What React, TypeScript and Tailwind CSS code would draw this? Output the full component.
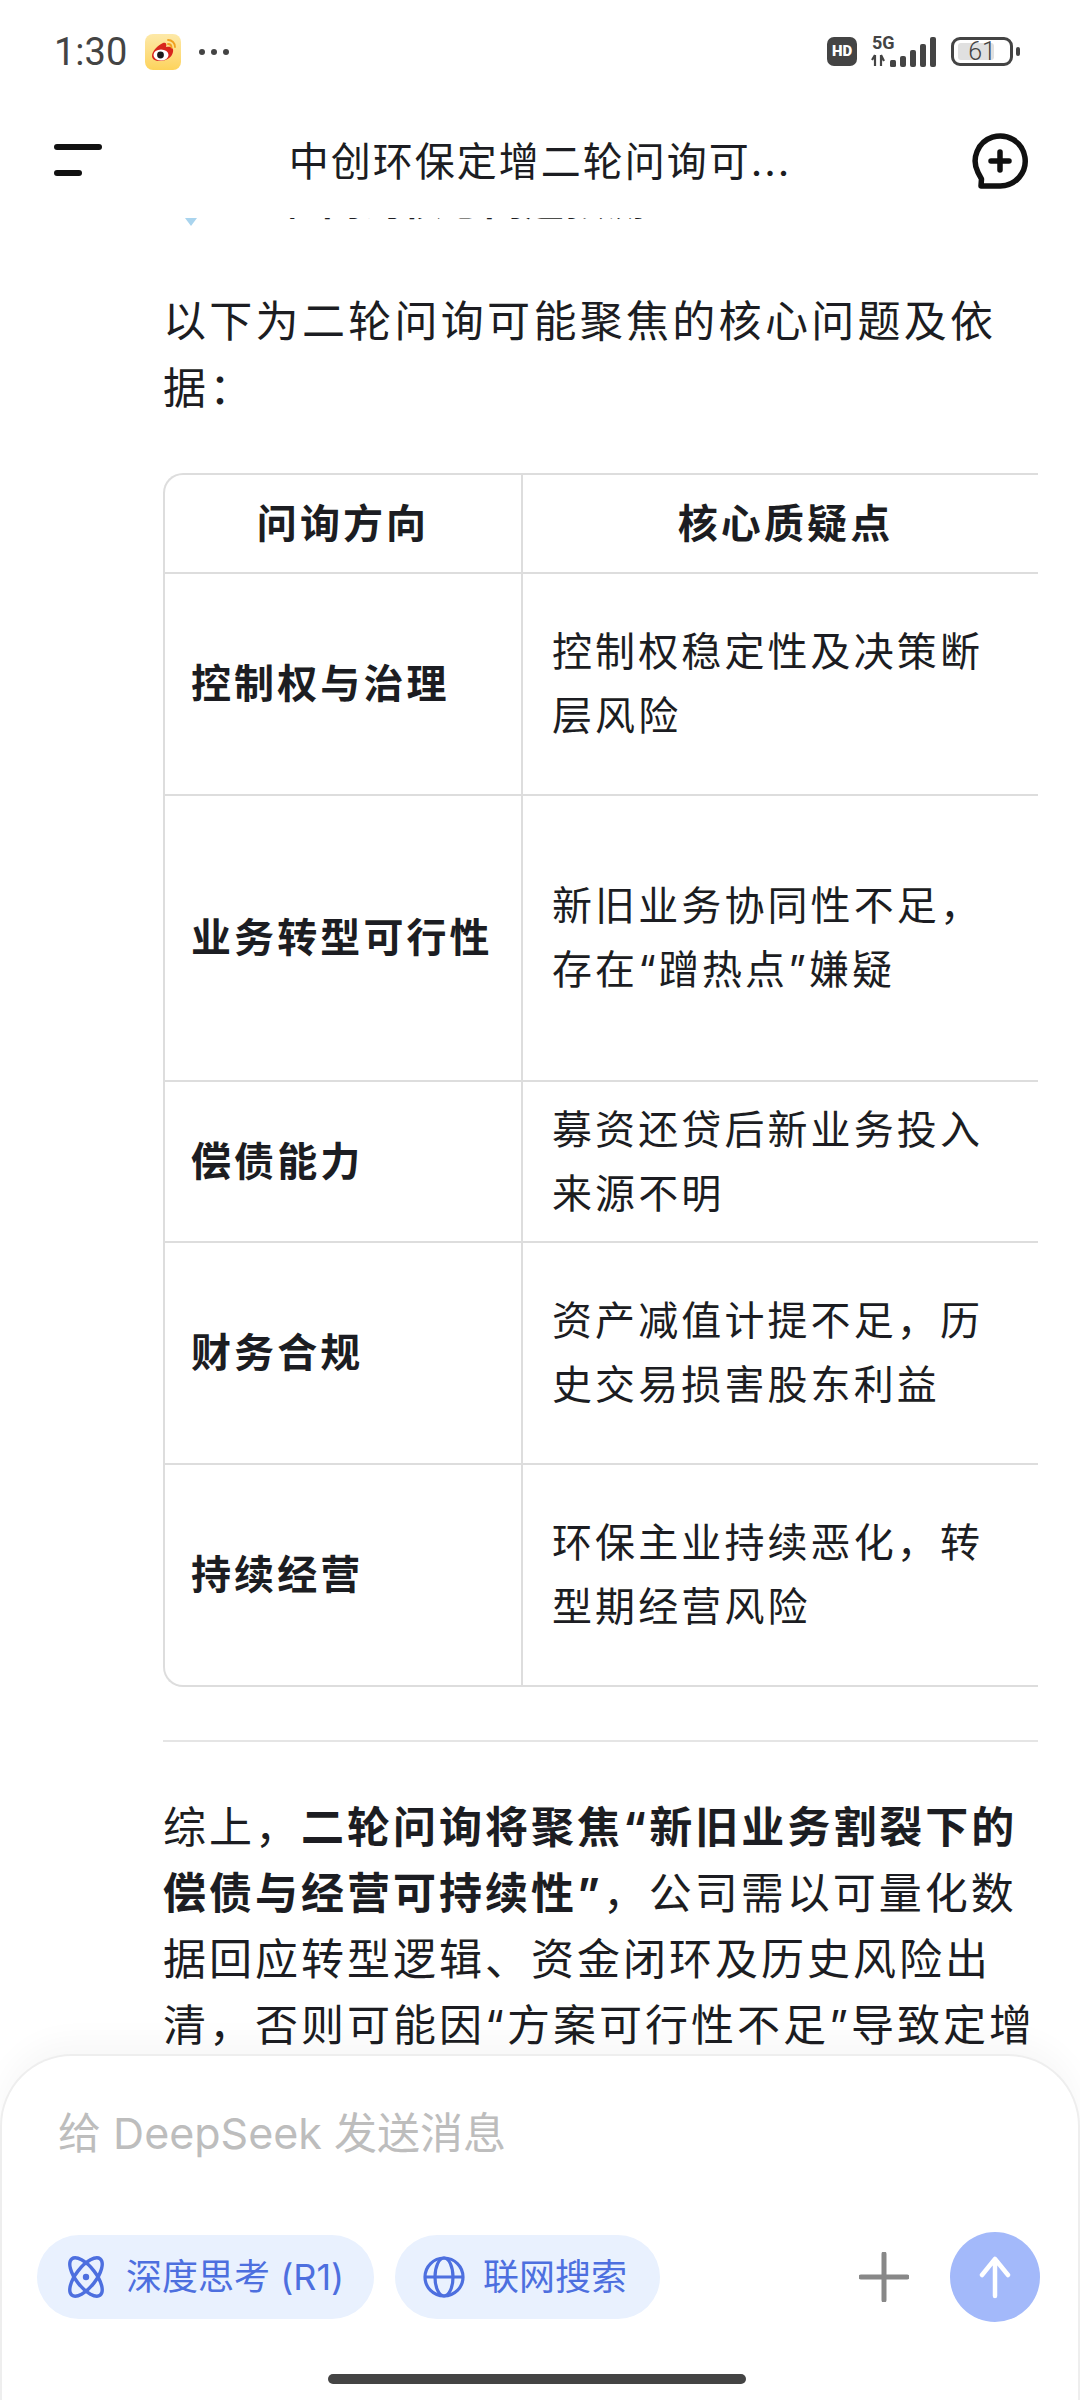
import React from 'react';

const FONT = "font-['Inter','Noto_Sans_CJK_SC',sans-serif]";

interface Row {
  title: string;
  lines: string[];
  height: string;
}

const rows: Row[] = [
  { title: '控制权与治理', lines: ['控制权稳定性及决策断', '层风险'], height: 'h-[222px]' },
  { title: '业务转型可行性', lines: ['新旧业务协同性不足，', '存在“蹭热点”嫌疑'], height: 'h-[286px]' },
  { title: '偿债能力', lines: ['募资还贷后新业务投入', '来源不明'], height: 'h-[161px]' },
  { title: '财务合规', lines: ['资产减值计提不足，历', '史交易损害股东利益'], height: 'h-[222px]' },
  { title: '持续经营', lines: ['环保主业持续恶化，转', '型期经营风险'], height: 'h-[220px]' },
];

const StatusBar = () => (
  <div className="flex h-[100px] items-center justify-between pl-[54px] pr-[60px] pt-[3px] text-[#444444]">
    <div className="flex items-center">
      <span className="w-[91px] font-['Roboto',sans-serif] text-[38px] leading-none">1:30</span>
      <div className="flex h-[36px] w-[36px] items-center justify-center rounded-[8px] bg-gradient-to-b from-[#fde9a8] to-[#fdd35a]">
        <svg viewBox="0 0 36 36" className="h-[36px] w-[36px]">
          <path d="M7 22c0-5 6-11 11-13 3-1 4 1 3 4 5-1 8 1 7 5-1 6-8 9-13 9s-8-2-8-5z" fill="#d8251d" />
          <ellipse cx="16" cy="21" rx="7.5" ry="5.5" fill="#fff" />
          <circle cx="15.5" cy="21" r="3.4" fill="#1a1a1a" />
          <path d="M23 6c4 0 7 3 7 7M23 10c2 0 3.500 1.500 3.500 3.500" stroke="#f0a020" strokeWidth="1.800" fill="none" strokeLinecap="round" />
        </svg>
      </div>
      <div className="ml-[18px] flex gap-[6px]">
        <span className="h-[6px] w-[6px] rounded-full bg-[#444444]" />
        <span className="h-[6px] w-[6px] rounded-full bg-[#444444]" />
        <span className="h-[6px] w-[6px] rounded-full bg-[#444444]" />
      </div>
    </div>
    <div className="flex items-center">
      <div className="flex h-[29px] w-[30px] items-center justify-center rounded-[7px] bg-[#444444] font-['Roboto',sans-serif] text-[15px] font-black leading-none text-white">
        HD
      </div>
      <svg viewBox="0 0 66 32" className="ml-[14px] h-[32px] w-[66px]">
        <text x="1" y="13" fontSize="18" fontWeight="700" fontFamily="Roboto, sans-serif" fill="#444444">5G</text>
        <path d="M4 19v11M1 24l3-5M10 19v11M13 25l-3-6" stroke="#444444" strokeWidth="2.200" fill="none" />
        <rect x="19" y="24" width="6" height="7" rx="1.500" fill="#444444" />
        <rect x="29" y="20" width="6" height="11" rx="2" fill="#444444" />
        <rect x="39" y="14" width="6" height="17" rx="2" fill="#444444" />
        <rect x="49" y="8" width="6" height="23" rx="2" fill="#444444" />
        <rect x="59" y="1" width="6" height="30" rx="2" fill="#444444" />
      </svg>
      <div className="ml-[14px] flex items-center">
        <div className="relative flex h-[29px] w-[62px] items-center justify-center rounded-[9px] border-[3px] border-[#444444] font-['Roboto',sans-serif] text-[25px] font-light leading-none">
          <span className="absolute bottom-[3px] left-[4px] top-[3px] w-[36px] rounded-[3px] bg-[#e0e0e0]" />
          <span className="relative">61</span>
        </div>
        <span className="ml-[3px] h-[9px] w-[4px] rounded-full bg-[#444444]" />
      </div>
    </div>
  </div>
);

const Header = () => (
  <div className="flex h-[118px] items-center justify-between pl-[54px] pr-[50px] pt-[6px]">
    <div className="-mt-[4px] flex w-[56px] flex-col gap-[20px]">
      <span className="h-[6px] w-[48px] rounded-full bg-[#111111]" />
      <span className="h-[6px] w-[28px] rounded-full bg-[#111111]" />
    </div>
    <div className="whitespace-nowrap text-[40px] leading-none tracking-[2px] text-[#1c1d22]">中创环保定增二轮问询可...</div>
    <svg viewBox="0 0 60 60" className="h-[60px] w-[60px]" fill="none" stroke="#111111" strokeLinecap="round" strokeLinejoin="round">
      <path d="M11 54h19a25 25 0 1 0-22-13.500l3.500 6.500z" strokeWidth="5.500" />
      <path d="M30 20v18M21 29h18" strokeWidth="5.500" />
    </svg>
  </div>
);

const AnswerTable = () => (
  <div className="w-[875px] overflow-hidden">
    <div className="w-[885px] overflow-hidden rounded-l-[20px] border-y-2 border-l-2 border-[#dddddd]">
      <div className="flex h-[99px] border-b-2 border-[#dddddd] text-[40px] font-bold tracking-[3.100px]">
        <div className="flex w-[358px] items-center justify-center border-r-2 border-[#dddddd]">问询方向</div>
        <div className="flex flex-1 items-center justify-center">核心质疑点</div>
      </div>
      {rows.map((row, i) => (
        <div key={row.title} className={`flex ${row.height} ${i < rows.length - 1 ? 'border-b-2 border-[#dddddd]' : ''}`}>
          <div className="flex w-[358px] items-center border-r-2 border-[#dddddd] pl-[26px] text-[40px] font-bold tracking-[3.100px]">
            {row.title}
          </div>
          <div className="flex flex-1 flex-col justify-center whitespace-nowrap pl-[29px] text-[40px] leading-[64px] tracking-[3.100px]">
            {row.lines.map((line) => (
              <div key={line}>{line}</div>
            ))}
          </div>
        </div>
      ))}
    </div>
  </div>
);

const Conversation = () => (
  <div className="h-[1840px] overflow-hidden pl-[163px] pr-[42px] text-[#1c1d22]">
    {/* line scrolled almost out of view under the header */}
    <div className="-mt-[43px] flex h-[52px] items-center whitespace-nowrap text-[40px] font-bold leading-none">
      <span className="ml-[22px] mt-[41px] h-0 w-0 border-x-[6px] border-t-[8px] border-x-transparent border-t-[#a9d4ee]" />
      <span className="ml-[44px] tracking-[0.500px]">二轮问询核心问题预测</span>
    </div>
    <p className="mt-[61px] whitespace-nowrap text-[43px] leading-[67px] tracking-[3.300px]">
      以下为二轮问询可能聚焦的核心问题及依
      <br />
      据：
    </p>
    <div className="mt-[51px]">
      <AnswerTable />
    </div>
    <div className="mt-[53px] h-[2px] bg-[#e5e5e5]" />
    <p className="mt-[52px] whitespace-nowrap text-[43px] leading-[66px] tracking-[3px]">
      综上，<b>二轮问询将聚焦“新旧业务割裂下的</b>
      <br />
      <b>偿债与经营可持续性”</b>，公司需以可量化数
      <br />
      据回应转型逻辑、资金闭环及历史风险出
      <br />
      清，否则可能因“方案可行性不足”导致定增
    </p>
  </div>
);

const AtomIcon = () => (
  <svg viewBox="0 0 42 42" className="h-[42px] w-[42px]" fill="none" stroke="#4d6fdf" strokeWidth="3.400">
    <ellipse cx="21" cy="21" rx="10" ry="23" transform="rotate(-38 21 21)" />
    <ellipse cx="21" cy="21" rx="10" ry="23" transform="rotate(38 21 21)" />
    <circle cx="21" cy="21" r="3.200" fill="#4d6fdf" stroke="none" />
  </svg>
);

const GlobeIcon = () => (
  <svg viewBox="0 0 42 42" className="h-[42px] w-[42px]" fill="none" stroke="#4d6fdf" strokeWidth="3.200">
    <circle cx="21" cy="21" r="19" />
    <ellipse cx="21" cy="21" rx="9" ry="19" />
    <path d="M2 21h38" />
  </svg>
);

const Composer = () => (
  <div className="absolute inset-x-0 bottom-0 flex h-[346px] flex-col rounded-t-[72px] border-x-2 border-t-2 border-[#eeeeee] bg-white shadow-[0_-14px_30px_rgba(0,0,0,0.03)]">
    <div className="mt-[50px] pl-[56px] text-[43px] leading-[54px] text-[#bdbdbd]">给 DeepSeek 发送消息</div>
    <div className="mt-[72px] flex items-center pl-[35px] pr-[38px]">
      <div className="flex h-[84px] w-[337px] items-center rounded-full bg-[#e9f1fe] pl-[28px] text-[36px] text-[#4d6fdf]">
        <AtomIcon />
        <span className="ml-[19px] whitespace-nowrap">深度思考 (R1)</span>
      </div>
      <div className="ml-[21px] flex h-[84px] w-[265px] items-center rounded-full bg-[#e9f1fe] pl-[28px] text-[36px] text-[#4d6fdf]">
        <GlobeIcon />
        <span className="ml-[18px] whitespace-nowrap">联网搜索</span>
      </div>
      <svg viewBox="0 0 50 50" className="ml-auto h-[50px] w-[50px]" fill="none" stroke="#888888" strokeWidth="5" strokeLinecap="round">
        <path d="M25 2v46M2 25h46" />
      </svg>
      <div className="ml-[41px] flex h-[90px] w-[90px] items-center justify-center rounded-full bg-[#a3b9fa]">
        <svg viewBox="0 0 40 44" className="h-[44px] w-[40px]" fill="none" stroke="#ffffff" strokeWidth="4.500" strokeLinecap="round" strokeLinejoin="round">
          <path d="M20 41V4M7 20 20 4l13 16" />
        </svg>
      </div>
    </div>
    <div className="mt-[52px] flex justify-center pr-[6px]">
      <span className="h-[10px] w-[418px] rounded-full bg-[#444444]" />
    </div>
  </div>
);

export default function App() {
  return (
    <div className={`relative h-[2400px] w-[1080px] overflow-hidden bg-white ${FONT}`}>
      <StatusBar />
      <Header />
      <Conversation />
      <Composer />
    </div>
  );
}
